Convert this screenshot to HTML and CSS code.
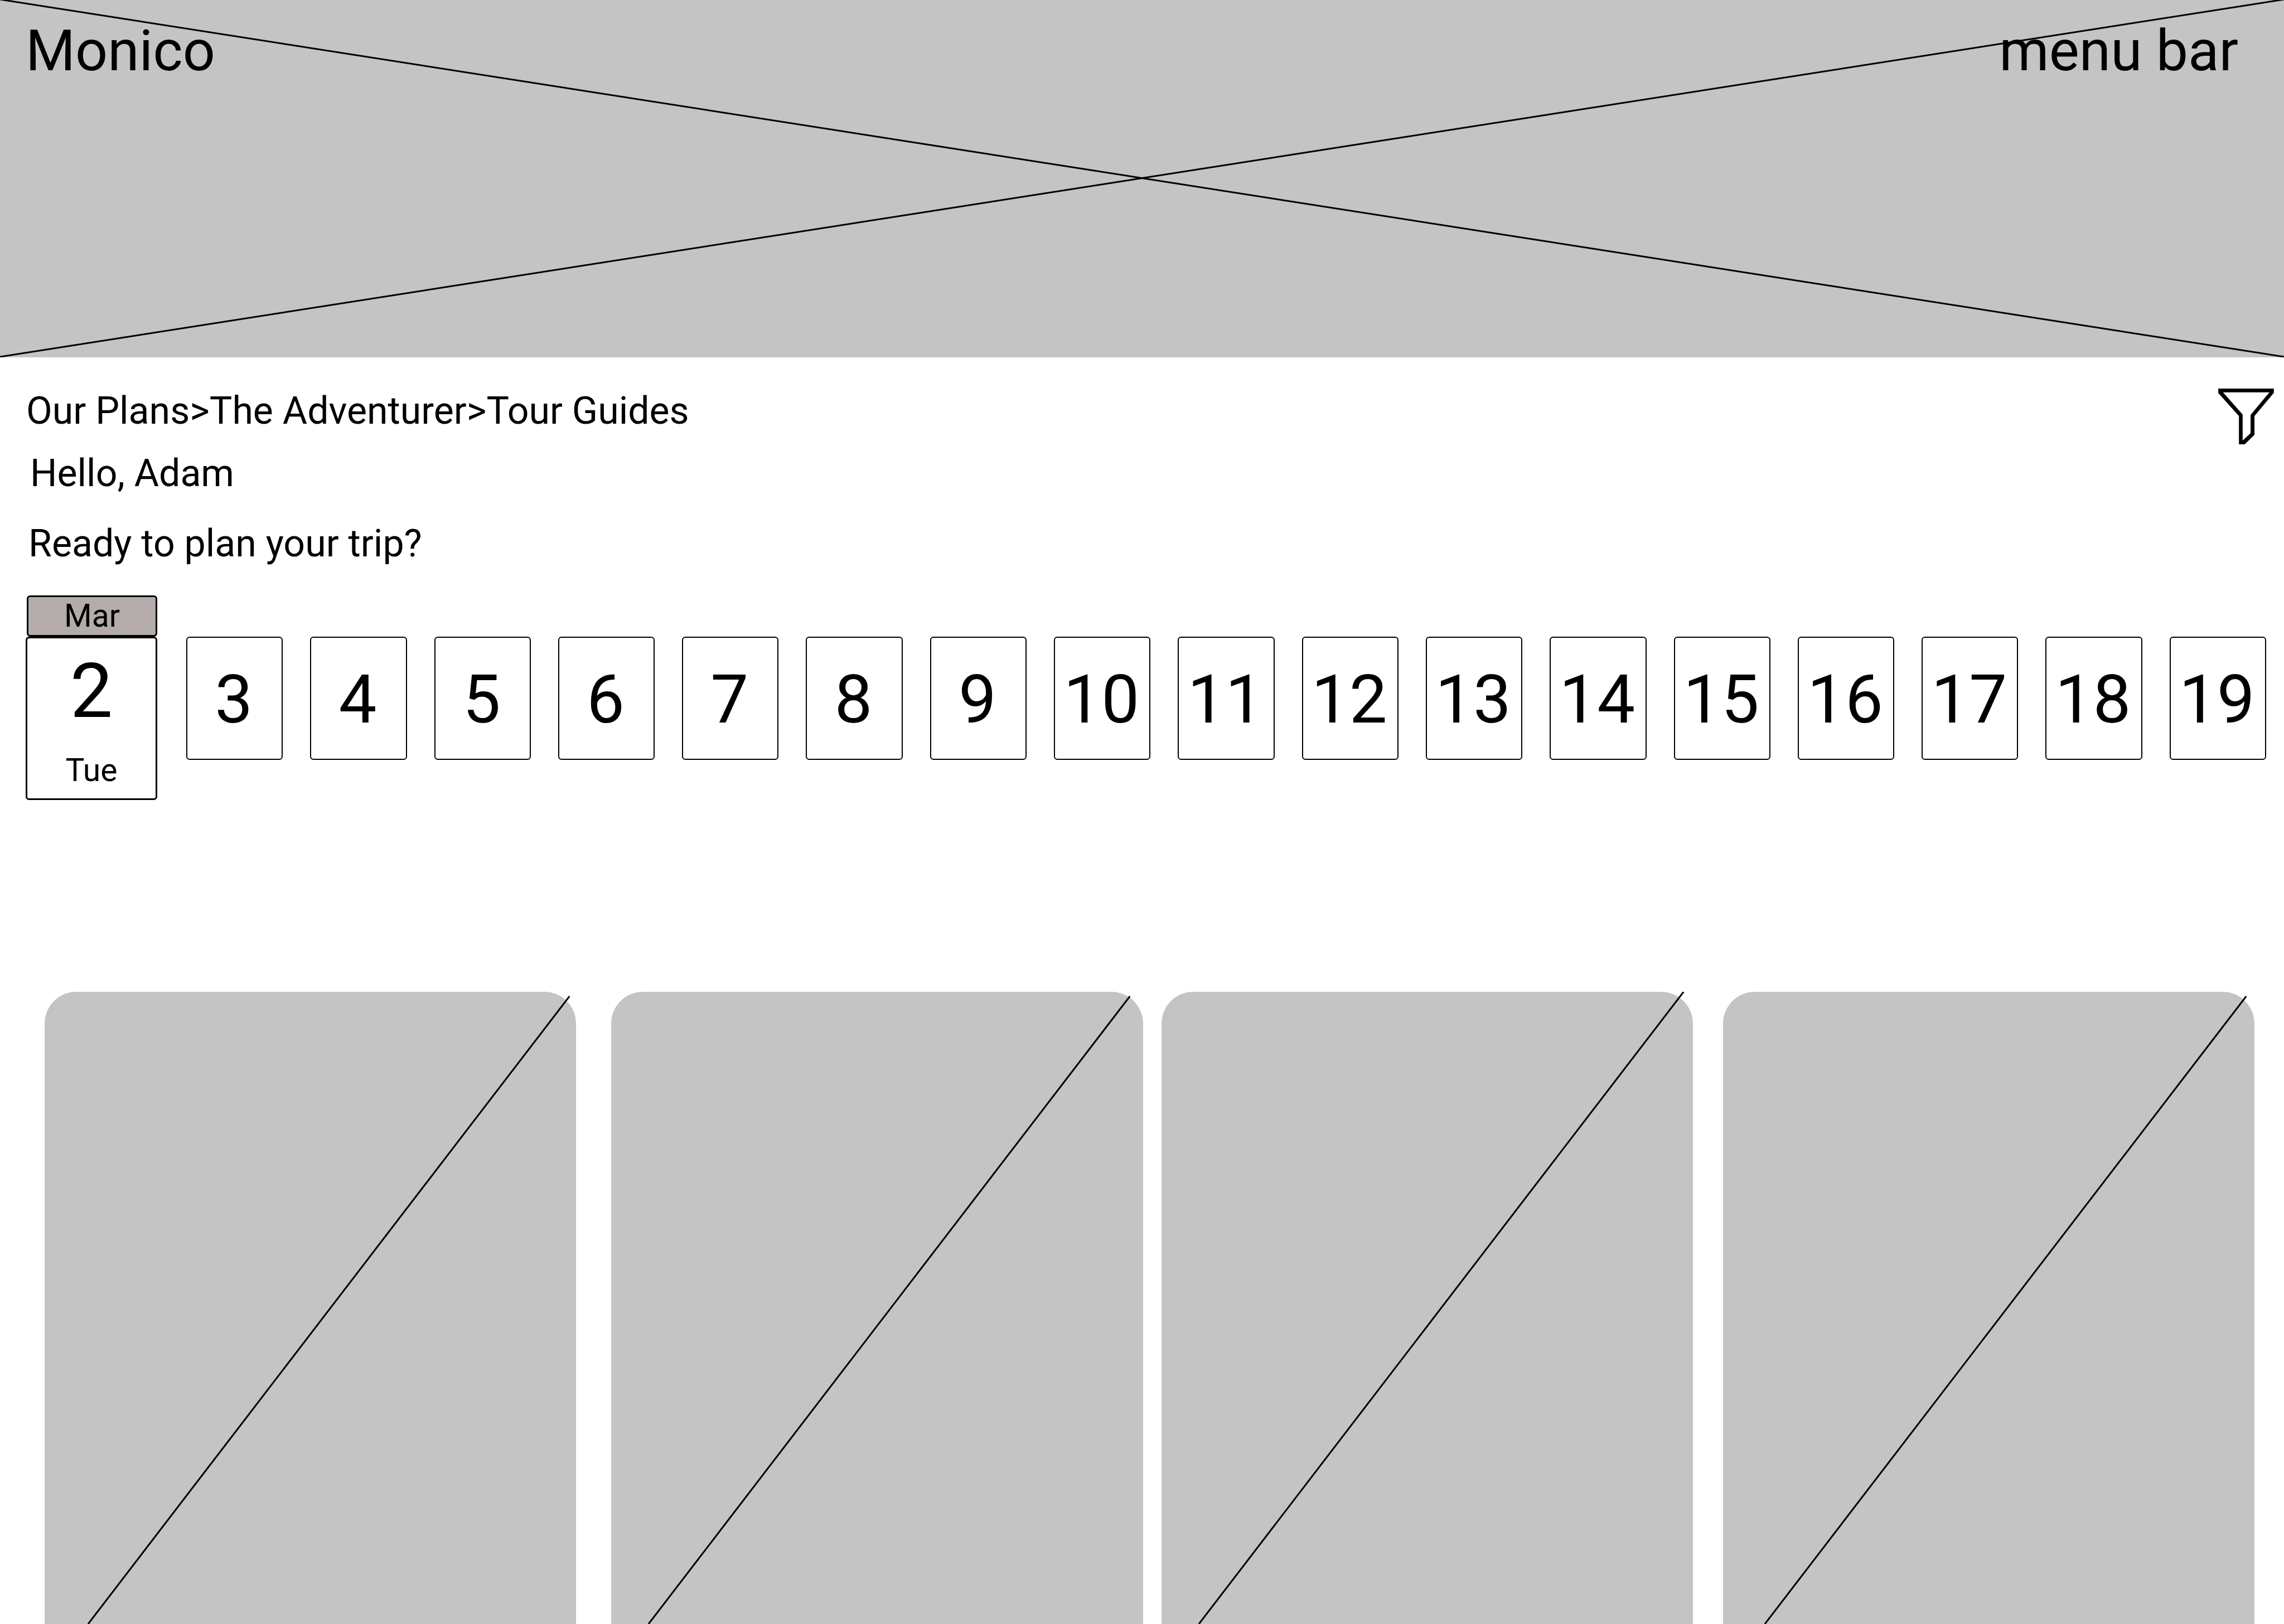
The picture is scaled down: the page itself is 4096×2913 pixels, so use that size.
FILE: index.html
```html
<!DOCTYPE html>
<html lang="en">
<head>
<meta charset="utf-8">
<title>Monico – Tour Guides</title>
<meta name="viewport" content="width=device-width, initial-scale=1">
<link rel="stylesheet" href="styles.css">
</head>
<body>
<header class="banner">
  <svg class="banner-cross" viewBox="0 0 4096 641" preserveAspectRatio="none" aria-hidden="true">
    <path class="wire" d="M0 -1L4096 640M0 640L4096 -1"/>
  </svg>
  <a class="banner-link" href="#">Monico</a>
  <nav><a class="banner-link" href="#">menu bar</a></nav>
</header>
<main class="page">
  <section class="intro">
    <div class="intro-text">
      <nav class="breadcrumb" aria-label="Breadcrumb"><a href="#">Our Plans</a>&gt;<a href="#">The Adventurer</a>&gt;<a href="#">Tour Guides</a></nav>
      <p class="greeting">Hello, Adam</p>
      <p class="prompt">Ready to plan your trip?</p>
    </div>
    <button class="filter" type="button" aria-label="Filter">
      <svg class="filter-icon" viewBox="348 227 315 316" aria-hidden="true">
        <path fill-rule="evenodd" d="M348 227H663V251L553 383V489L498 543H465V383L348 252ZM375 248L486 374V522L531 480V376L638 248Z"/>
      </svg>
    </button>
  </section>
  <section class="calendar" aria-label="Choose a date">
    <div class="selected">
      <div class="month">Mar</div>
      <button class="today" type="button"><span class="today-number">2</span><span class="weekday">Tue</span></button>
    </div>
    <div class="days">
      <button class="day" type="button">3</button>
      <button class="day" type="button">4</button>
      <button class="day" type="button">5</button>
      <button class="day" type="button">6</button>
      <button class="day" type="button">7</button>
      <button class="day" type="button">8</button>
      <button class="day" type="button">9</button>
      <button class="day" type="button">10</button>
      <button class="day" type="button">11</button>
      <button class="day" type="button">12</button>
      <button class="day" type="button">13</button>
      <button class="day" type="button">14</button>
      <button class="day" type="button">15</button>
      <button class="day" type="button">16</button>
      <button class="day" type="button">17</button>
      <button class="day" type="button">18</button>
      <button class="day" type="button">19</button>
    </div>
  </section>
  <section class="guides" aria-label="Tour guides">
    <article class="guide"><svg class="guide-line" viewBox="0 0 953 1134" preserveAspectRatio="none" aria-hidden="true"><path class="wire" d="M941 8L78 1134"/></svg></article>
    <article class="guide"><svg class="guide-line" viewBox="0 0 953 1134" preserveAspectRatio="none" aria-hidden="true"><path class="wire" d="M930 8L67 1134"/></svg></article>
    <article class="guide"><svg class="guide-line" viewBox="0 0 953 1134" preserveAspectRatio="none" aria-hidden="true"><path class="wire" d="M936 0L67 1134"/></svg></article>
    <article class="guide"><svg class="guide-line" viewBox="0 0 953 1134" preserveAspectRatio="none" aria-hidden="true"><path class="wire" d="M938 8L75 1134"/></svg></article>
  </section>
</main>
</body>
</html>
```
FILE: styles.css
```css
* { box-sizing: border-box; }

body {
  margin: 0;
  min-height: 100vh;
  display: flex;
  flex-direction: column;
  background: #fff;
  color: #000;
  font-family: Roboto, "Liberation Sans", sans-serif;
}

a { color: inherit; text-decoration: none; }
p { margin: 0; }

button {
  margin: 0;
  padding: 0;
  border: 0;
  background: none;
  color: inherit;
  font: inherit;
  cursor: pointer;
}

.wire {
  fill: none;
  stroke: #000;
  stroke-width: 3px;
  vector-effect: non-scaling-stroke;
}

.banner {
  position: relative;
  display: flex;
  justify-content: space-between;
  align-items: flex-start;
  min-height: 641px;
  padding: 31px 82px 0 46px;
  background: #c4c4c4;
  font-size: 102px;
  line-height: 120px;
}

.banner-cross {
  position: absolute;
  inset: 0;
  width: 100%;
  height: 100%;
}

.banner-link { position: relative; }

.page {
  flex: 1;
  display: flex;
  flex-direction: column;
}

.intro {
  display: flex;
  justify-content: space-between;
  align-items: flex-start;
  padding: 56px 18px 0 47px;
  font-size: 68px;
  line-height: 80px;
}

.greeting { margin-top: 32px; padding-left: 7px; }
.prompt { margin-top: 46px; padding-left: 4px; }

.filter-icon {
  display: block;
  width: 100px;
  height: 100px;
}

.calendar {
  display: flex;
  align-items: flex-start;
  gap: 52px;
  padding: 53px 32px 0 46px;
}

.selected {
  flex: none;
  width: 236px;
  text-align: center;
  font-size: 57px;
  line-height: 68px;
}

.month {
  margin-left: 2px;
  border: 3px solid #000;
  border-radius: 6px;
  background: #b4abab;
}

.today {
  display: block;
  width: 100%;
  padding: 15px 0 16px;
  border: 3px solid #000;
  border-radius: 6px;
}

.today-number {
  display: block;
  font-size: 136px;
  line-height: 160px;
}

.weekday { display: block; margin-top: 28px; }

.days {
  flex: 1;
  display: grid;
  grid-template-columns: repeat(17, minmax(0, 1fr));
  gap: 49px;
  padding-top: 74px;
}

.day {
  padding: 40px 3px 35px 0;
  border: 2px solid #000;
  border-radius: 6px;
  font-size: 121px;
  line-height: 142px;
}

.guides {
  flex: 1;
  display: flex;
  margin-top: 344px;
  padding: 0 53px 0 80px;
}

.guide {
  position: relative;
  flex: 1;
  border-radius: 57px 57px 0 0;
  background: #c4c4c4;
}

.guide:nth-child(2) { margin-left: 63px; }
.guide:nth-child(3) { margin-left: 33px; }
.guide:nth-child(4) { margin-left: 54px; }

.guide-line {
  position: absolute;
  inset: 0;
  width: 100%;
  height: 100%;
}
```
